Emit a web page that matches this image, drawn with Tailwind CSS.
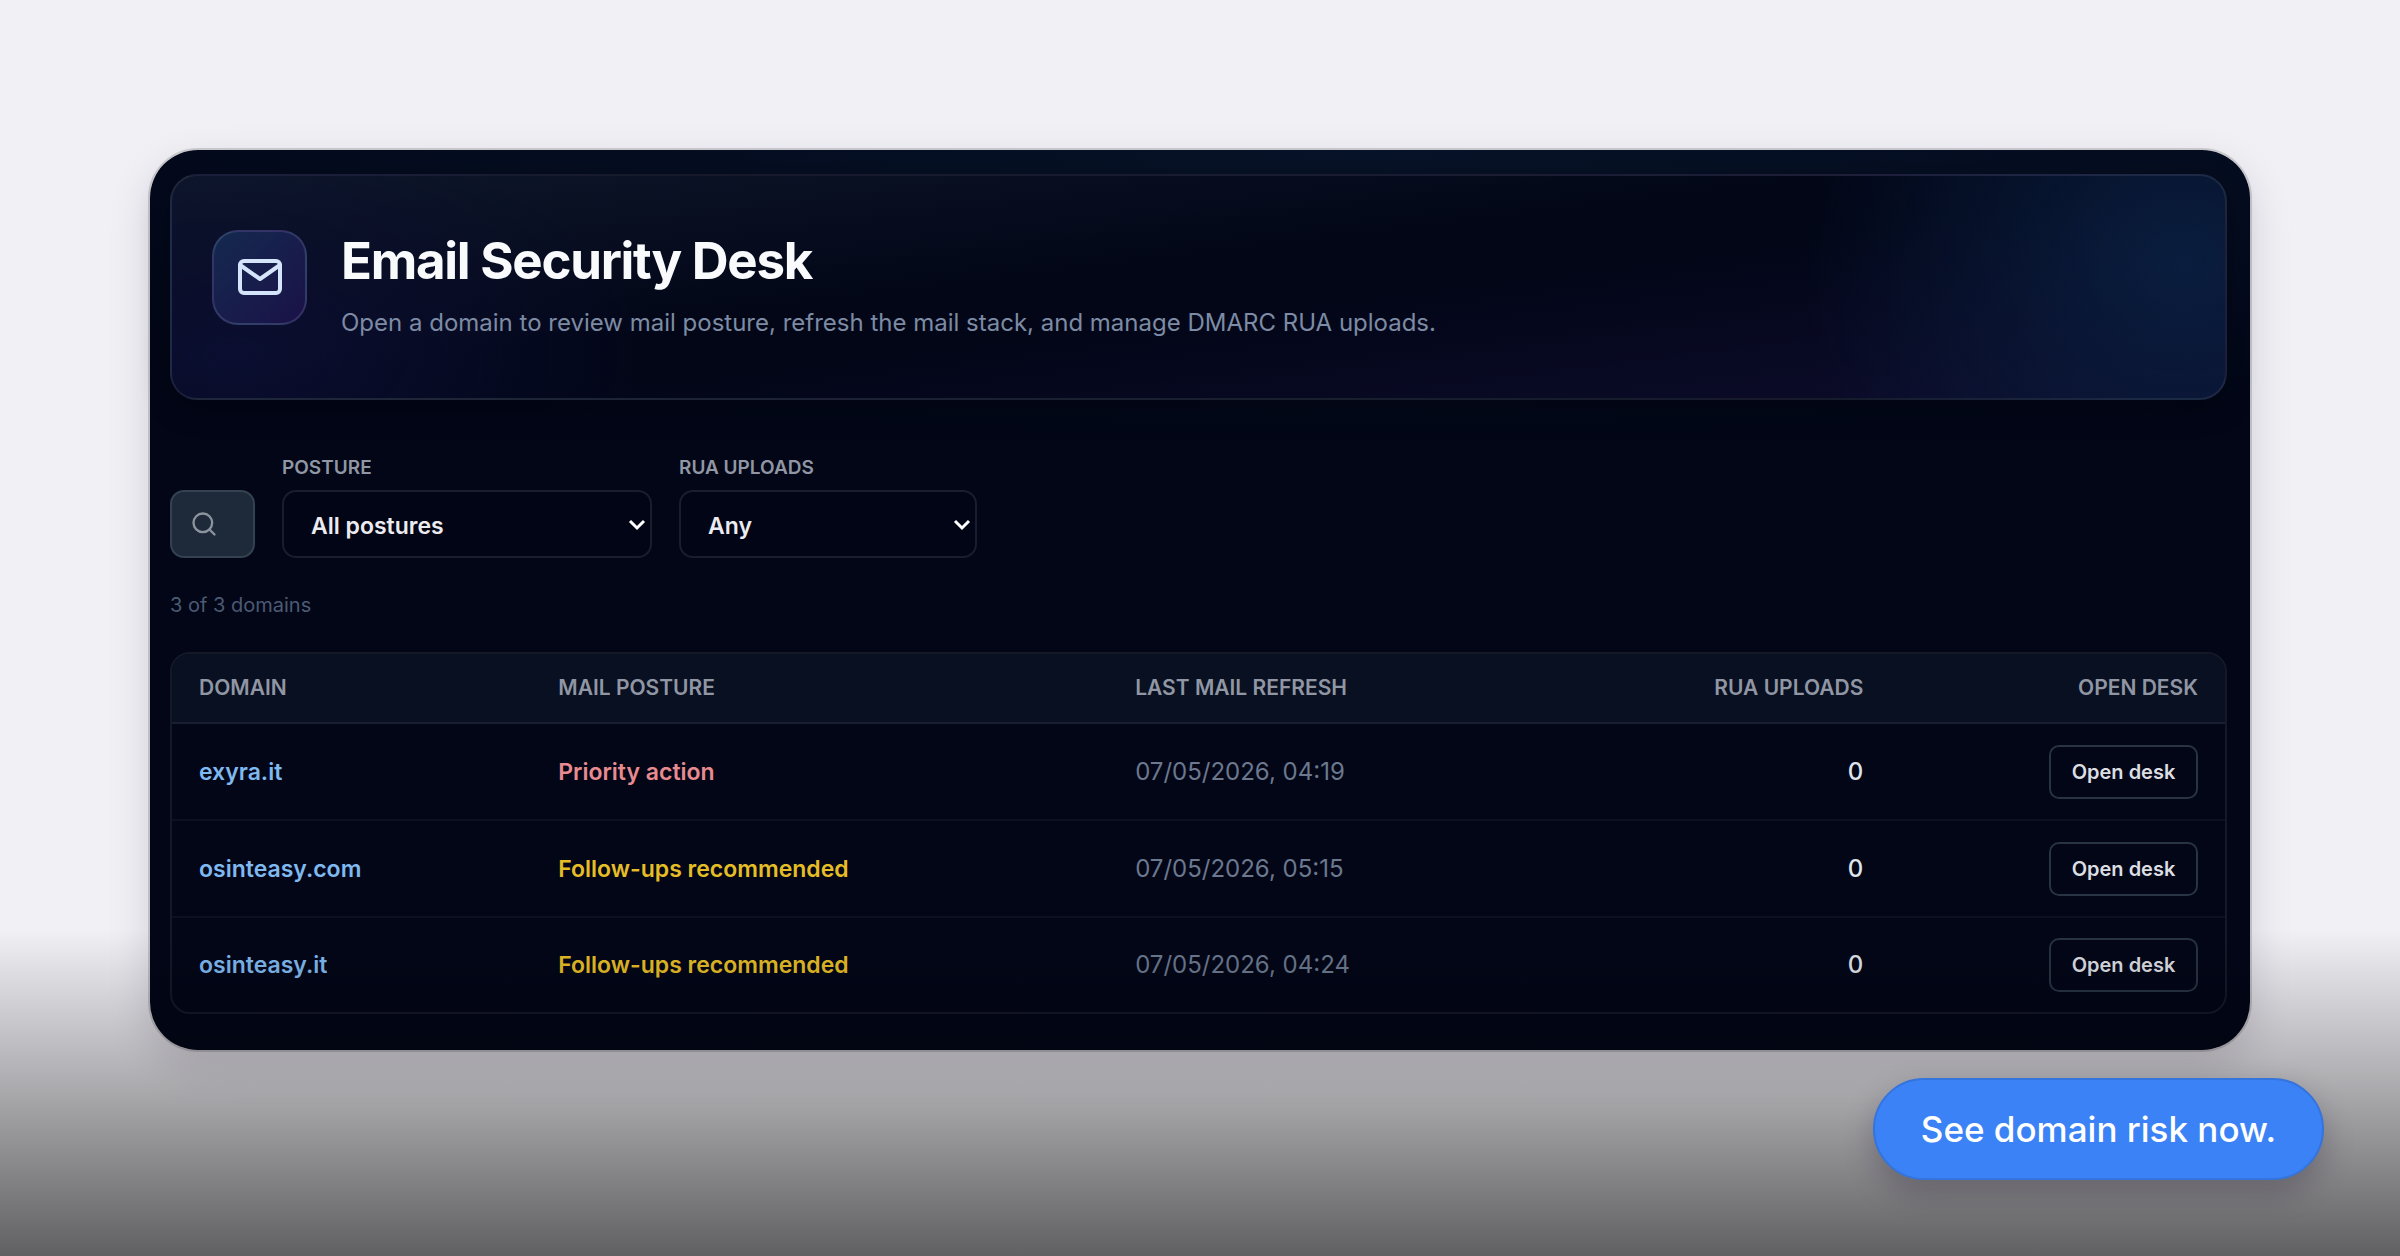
<!DOCTYPE html>
<html lang="en">
  <head>
    <meta charset="UTF-8" />
    <meta name="viewport" content="width=device-width, initial-scale=1.0" />
    <script src="https://cdn.jsdelivr.net/npm/@tailwindcss/browser@4"></script>
    <title>Email Security Desk</title>
  </head>
  <body
    class="relative min-h-screen bg-[#f1f0f5] font-['Inter',sans-serif] text-white"
  >
    <div class="px-[150px] pt-[150px]">
      <main
        class="min-h-[900px] rounded-[48px] bg-[#020617] bg-[radial-gradient(ellipse_80%_100%_at_58%_0%,#071328_0%,#07132800_100%)] bg-[length:100%_300px] bg-no-repeat pt-[24px] pr-[23px] pb-[36px] pl-[20px] outline-2 outline-black/15 shadow-[0_16px_44px_rgba(20,10,40,0.14)]"
      >
        <header
          class="flex h-[226px] items-center gap-[34px] rounded-[27px] border-2 border-white/8 bg-[radial-gradient(ellipse_380px_340px_at_98%_40%,#0a1d3e_0%,#0a1d3e00_100%),radial-gradient(ellipse_420px_220px_at_3%_80%,#0b0e30_0%,#0b0e3000_100%),linear-gradient(173deg,#0e172a_0%,#020617_45%,#020617_55%,#0d0c2c_100%)] px-[40px] shadow-[0_8px_30px_rgba(0,0,0,0.3)]"
        >
          <div
            class="mb-[20px] flex size-[95px] items-center justify-center rounded-[26px] border-2 border-indigo-200/15 bg-linear-to-br from-[#13294f] to-[#1a1148]"
          >
            <svg
              class="size-[48px] text-[#d3e4fb]"
              viewBox="0 0 24 24"
              fill="none"
              stroke="currentColor"
              stroke-width="2"
              stroke-linecap="round"
              stroke-linejoin="round"
            >
              <path
                d="M4 4h16c1.100 0 2 .9 2 2v12c0 1.100-.9 2-2 2H4c-1.100 0-2-.9-2-2V6c0-1.100.9-2 2-2z"
              />
              <polyline points="22,6 12,13 2,6" />
            </svg>
          </div>
          <div>
            <h1 class="text-[51px] leading-[60px] font-bold tracking-tight text-[#f8fafc]">
              Email Security Desk
            </h1>
            <p class="mt-[14px] mb-[2px] text-[24px] leading-[36px] text-[#7d8ba4]">
              Open a domain to review mail posture, refresh the mail stack, and
              manage DMARC RUA uploads.
            </p>
          </div>
        </header>

        <form class="mt-[56px] flex items-end gap-[27px]" onsubmit="return false;">
          <button
            type="button"
            aria-label="Search"
            class="flex h-[68px] w-[85px] items-center rounded-[14px] border-2 border-[#334150] bg-[#1e2a39] pl-[18px]"
          >
            <svg
              class="size-[28px] text-[#8b949e]"
              viewBox="0 0 24 24"
              fill="none"
              stroke="currentColor"
              stroke-width="2"
              stroke-linecap="round"
              stroke-linejoin="round"
            >
              <circle cx="11" cy="11" r="8" />
              <path d="m21 21-4.300-4.300" />
            </svg>
          </button>
          <div class="flex flex-col gap-[10px]">
            <label for="posture" class="text-[19px] leading-[24px] font-semibold text-[#9096a3]"
              >POSTURE</label
            >
            <div class="relative">
              <select
                id="posture"
                class="h-[68px] w-[370px] appearance-none rounded-[14px] border-2 border-[#1a1d2c] bg-[#020515] px-[27px] pt-[4px] text-[23px] font-semibold text-[#ececf0]"
              >
                <option>All postures</option>
              </select>
              <svg
                class="pointer-events-none absolute top-[26px] right-[6px] size-[18px] text-white"
                viewBox="0 0 18 18"
                fill="none"
                stroke="currentColor"
                stroke-width="3"
              >
                <path d="M2 5l7 7 7-7" />
              </svg>
            </div>
          </div>
          <div class="flex flex-col gap-[10px]">
            <label for="uploads" class="text-[19px] leading-[24px] font-semibold text-[#9096a3]"
              >RUA UPLOADS</label
            >
            <div class="relative">
              <select
                id="uploads"
                class="h-[68px] w-[298px] appearance-none rounded-[14px] border-2 border-[#1a1d2c] bg-[#020515] px-[27px] pt-[4px] text-[23px] font-semibold text-[#ececf0]"
              >
                <option>Any</option>
              </select>
              <svg
                class="pointer-events-none absolute top-[26px] right-[6px] size-[18px] text-white"
                viewBox="0 0 18 18"
                fill="none"
                stroke="currentColor"
                stroke-width="3"
              >
                <path d="M2 5l7 7 7-7" />
              </svg>
            </div>
          </div>
        </form>

        <p class="mt-[32px] text-[20px] leading-[30px] text-[#4b5b74]">3 of 3 domains</p>

        <div class="mt-[32px] overflow-hidden rounded-[20px] border-2 border-[#151927]">
          <table class="w-full table-fixed text-[24px] leading-[36px]">
            <colgroup>
              <col class="w-[17.5%]" />
              <col class="w-[28.1%]" />
              <col class="w-[21.6%]" />
              <col class="w-[16.5%]" />
              <col class="w-[16.3%]" />
            </colgroup>
            <thead class="bg-[#091021] text-[21px] leading-[28px] text-[#9096a3]">
              <tr class="h-[69px] border-b-2 border-[#182030]">
                <th class="px-[27px] text-left font-semibold">DOMAIN</th>
                <th class="px-[27px] text-left font-semibold">MAIL POSTURE</th>
                <th class="px-[27px] text-left font-semibold">LAST MAIL REFRESH</th>
                <th class="px-[27px] text-right font-semibold">RUA UPLOADS</th>
                <th class="px-[27px] text-right font-semibold">OPEN DESK</th>
              </tr>
            </thead>
            <tbody>
              <tr class="h-[97px] border-b-2 border-[#0d111f]">
                <td class="px-[27px]"><a href="#" class="text-[23px] font-semibold text-[#7fb9f0]">exyra.it</a></td>
                <td class="px-[27px] text-[23px] font-semibold text-[#e88b8f]">Priority action</td>
                <td class="px-[27px] text-[#6b788e]">07/05/2026, 04:19</td>
                <td class="px-[27px] text-right font-medium text-[#dfe3ea]">0</td>
                <td class="px-[27px] text-right">
                  <button type="button" class="h-[54px] w-[149px] rounded-[10px] border-2 border-[#283343] text-[20px] font-semibold text-[#dcdee2]">Open desk</button>
                </td>
              </tr>
              <tr class="h-[97px] border-b-2 border-[#0d111f]">
                <td class="px-[27px]"><a href="#" class="text-[23px] font-semibold text-[#7fb9f0]">osinteasy.com</a></td>
                <td class="px-[27px] text-[23px] font-semibold text-[#e5bd25]">Follow-ups recommended</td>
                <td class="px-[27px] text-[#6b788e]">07/05/2026, 05:15</td>
                <td class="px-[27px] text-right font-medium text-[#dfe3ea]">0</td>
                <td class="px-[27px] text-right">
                  <button type="button" class="h-[54px] w-[149px] rounded-[10px] border-2 border-[#283343] text-[20px] font-semibold text-[#dcdee2]">Open desk</button>
                </td>
              </tr>
              <tr class="h-[95px]">
                <td class="px-[27px]"><a href="#" class="text-[23px] font-semibold text-[#7fb9f0]">osinteasy.it</a></td>
                <td class="px-[27px] text-[23px] font-semibold text-[#e5bd25]">Follow-ups recommended</td>
                <td class="px-[27px] text-[#6b788e]">07/05/2026, 04:24</td>
                <td class="px-[27px] text-right font-medium text-[#dfe3ea]">0</td>
                <td class="px-[27px] text-right">
                  <button type="button" class="h-[54px] w-[149px] rounded-[10px] border-2 border-[#283343] text-[20px] font-semibold text-[#dcdee2]">Open desk</button>
                </td>
              </tr>
            </tbody>
          </table>
        </div>
      </main>
    </div>

    <!-- bottom fade -->
    <div
      class="pointer-events-none absolute inset-x-0 bottom-0 h-[26%] bg-linear-to-b from-black/0 to-black/60"
    ></div>

    <button
      type="button"
      class="absolute right-[76px] bottom-[76px] h-[102px] rounded-full border-2 border-[#3474dc] bg-[#3b82f6] px-[46px] text-[35px] font-medium text-white shadow-[0_12px_30px_rgba(20,10,40,0.25)]"
    >
      See domain risk now.
    </button>
  </body>
</html>
